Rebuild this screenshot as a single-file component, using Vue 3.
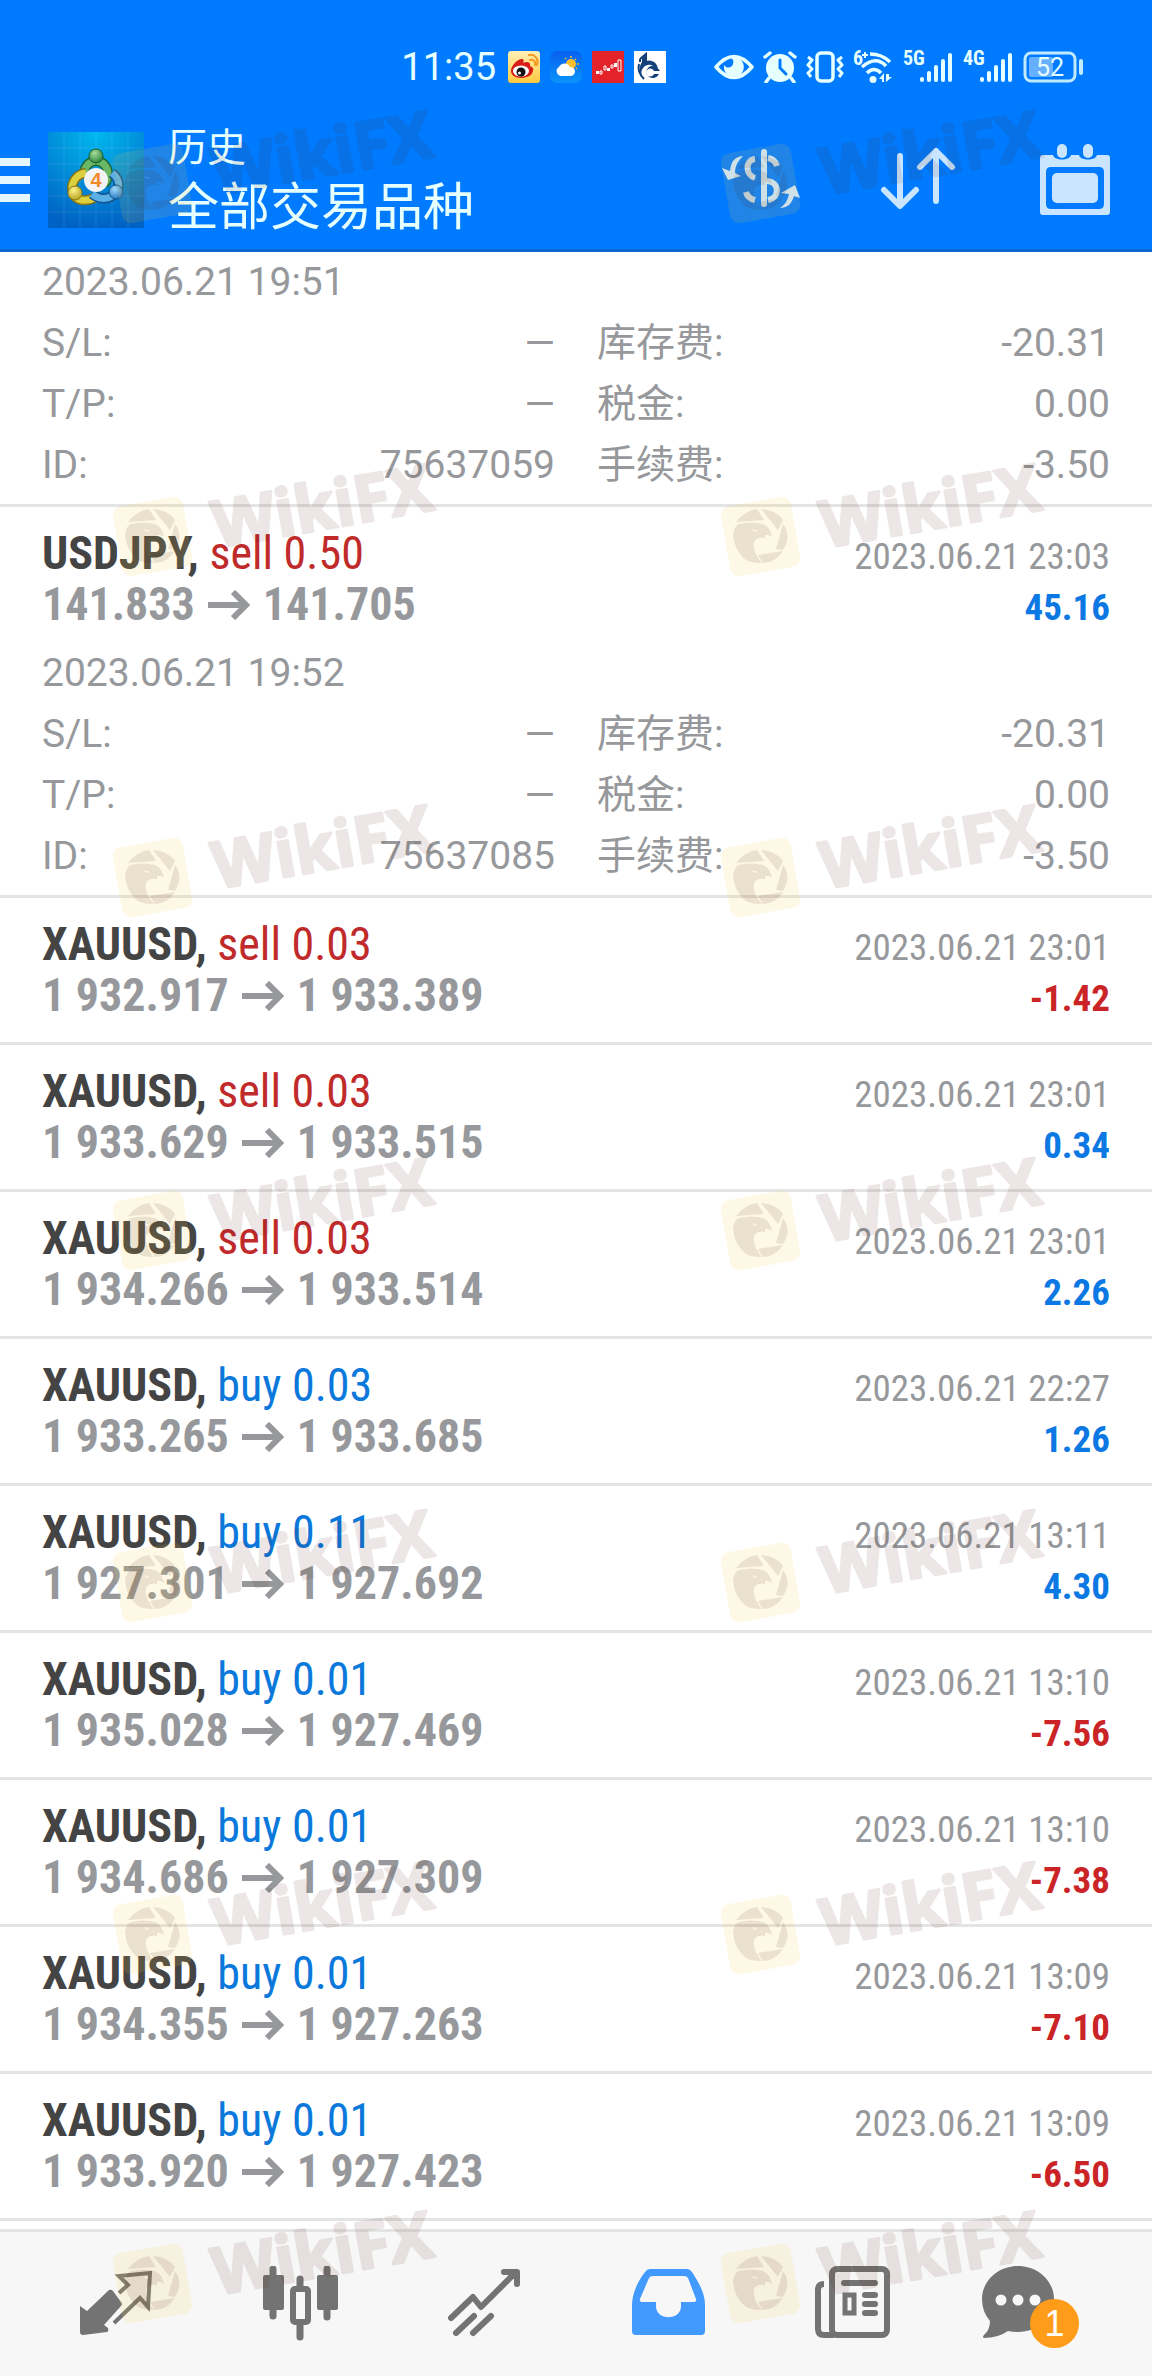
<script setup>
const details = [
  { open: '2023.06.21 19:51', id: '75637059', swap: '-20.31', tax: '0.00', fee: '-3.50' },
  { open: '2023.06.21 19:52', id: '75637085', swap: '-20.31', tax: '0.00', fee: '-3.50' },
]

const deals = [
  { symbol: 'USDJPY', side: 'sell', lots: '0.50', from: '141.833', to: '141.705', time: '2023.06.21 23:03', profit: '45.16', detail: details[1] },
  { symbol: 'XAUUSD', side: 'sell', lots: '0.03', from: '1 932.917', to: '1 933.389', time: '2023.06.21 23:01', profit: '-1.42' },
  { symbol: 'XAUUSD', side: 'sell', lots: '0.03', from: '1 933.629', to: '1 933.515', time: '2023.06.21 23:01', profit: '0.34' },
  { symbol: 'XAUUSD', side: 'sell', lots: '0.03', from: '1 934.266', to: '1 933.514', time: '2023.06.21 23:01', profit: '2.26' },
  { symbol: 'XAUUSD', side: 'buy', lots: '0.03', from: '1 933.265', to: '1 933.685', time: '2023.06.21 22:27', profit: '1.26' },
  { symbol: 'XAUUSD', side: 'buy', lots: '0.11', from: '1 927.301', to: '1 927.692', time: '2023.06.21 13:11', profit: '4.30' },
  { symbol: 'XAUUSD', side: 'buy', lots: '0.01', from: '1 935.028', to: '1 927.469', time: '2023.06.21 13:10', profit: '-7.56' },
  { symbol: 'XAUUSD', side: 'buy', lots: '0.01', from: '1 934.686', to: '1 927.309', time: '2023.06.21 13:10', profit: '-7.38' },
  { symbol: 'XAUUSD', side: 'buy', lots: '0.01', from: '1 934.355', to: '1 927.263', time: '2023.06.21 13:09', profit: '-7.10' },
  { symbol: 'XAUUSD', side: 'buy', lots: '0.01', from: '1 933.920', to: '1 927.423', time: '2023.06.21 13:09', profit: '-6.50' },
]

// the first deal is scrolled half out, only its details are left
const rows = [{ detail: details[0] }, ...deals]

const signalBars = [5, 11, 17, 23, 29]
const markRows = [107, 460, 801, 1154, 1506, 1858, 2207]

const cells = (d) => [
  ['S/L:', '—'],
  ['库存费:', d.swap],
  ['T/P:', '—'],
  ['税金:', d.tax],
  ['ID:', d.id],
  ['手续费:', d.fee],
]
</script>

<template>
  <div class="app">
    <header class="header">
      <div class="status">
        <span class="clock">11:35</span>
        <div class="notes">
          <svg width="32" height="32" viewBox="0 0 32 32">
            <defs>
              <linearGradient id="weibo" x1="0" y1="0" x2="0" y2="1">
                <stop offset="0" stop-color="#fff0b8" />
                <stop offset="1" stop-color="#ffc93c" />
              </linearGradient>
            </defs>
            <rect width="32" height="32" rx="3" fill="url(#weibo)" />
            <path d="M3 20c0-5 6-12 11-12 2 0 2 2 1 4 4-2 8-1 7 3 3 1 4 3 3 5-1 5-7 7-12 7C7 27 3 24 3 20z" fill="#d81e16" />
            <ellipse cx="13" cy="20" rx="8" ry="5.500" fill="#fff" />
            <circle cx="13" cy="21" r="4.500" fill="#111" />
            <circle cx="11.500" cy="22" r="1.500" fill="#fff" />
            <path d="M22 9c4-1 6 2 5 5M21 4c6-1 10 4 8 10" fill="none" stroke="#f39a1d" stroke-width="2" stroke-linecap="round" />
          </svg>
          <svg width="32" height="32" viewBox="0 0 32 32">
            <defs>
              <linearGradient id="sky" x1="0" y1="0" x2="0" y2="1">
                <stop offset="0" stop-color="#0860ef" />
                <stop offset="1" stop-color="#0a94fb" />
              </linearGradient>
            </defs>
            <rect width="32" height="32" rx="7" fill="url(#sky)" />
            <circle cx="21" cy="13" r="5" fill="#ffc02e" />
            <path d="M21 5v2M26 8l-1 1M29 13h-2M15 7l1 1M27 18l-1-1" stroke="#ffc02e" stroke-width="1.500" />
            <path d="M10 25a5 5 0 0 1-1-9 6 6 0 0 1 11 0 4.500 4.500 0 0 1 1 9z" fill="#fff" />
          </svg>
          <svg width="32" height="32" viewBox="0 0 32 32">
            <rect width="32" height="32" fill="#e3222a" />
            <path d="M4 20h3v3H4zM15 17h3v3h-3zM22 12h3v4h-3z" fill="#fff" />
            <path d="M8 20h2v3H8zM12 15h2v4h-2zM19 14h2v3h-2zM26 9h3v11h-3z" fill="none" stroke="#fff" />
          </svg>
          <svg width="32" height="32" viewBox="0 0 32 32">
            <rect width="32" height="32" fill="#fff" />
            <path d="M6 8l6-5v9M6 8v3M5 13q-2 8 5 15" fill="none" stroke="#14417c" stroke-width="2" />
            <path d="M8 7l4-3v6c6-2 12 2 12 9h-3c-1-6-8-7-12-2-2 3-2 5-1 8-3-4-3-10 0-14z" fill="#14417c" />
            <path d="M26 20h-6a4 4 0 1 0 0 3h5c-2 4-6 5-10 3-5-4-2-11 3-11 4 0 6 2 8 5z" fill="#14417c" />
          </svg>
        </div>
        <div class="system">
          <svg width="40" height="32" viewBox="0 0 40 32">
            <path d="M2 16Q20-5 38 16 20 37 2 16z" fill="none" stroke="#e6ffff" stroke-width="3.500" stroke-linejoin="round" />
            <path d="M20 6a10 10 0 1 1-10 8c3 4 8 3 9-1 1-3 0-5-2-6z" fill="#e6ffff" />
          </svg>
          <svg width="34" height="32" viewBox="0 0 34 32">
            <circle cx="17" cy="17" r="14" fill="#e6ffff" />
            <path d="M2 6l5-4M32 6l-5-4M6 27l-3 4M28 27l3 4" stroke="#e6ffff" stroke-width="3.500" stroke-linecap="round" />
            <path d="M17 9v8l6 6" fill="none" stroke="#007bff" stroke-width="3" stroke-linecap="round" />
          </svg>
          <svg width="38" height="32" viewBox="0 0 38 32" fill="none" stroke="#e6ffff" stroke-linejoin="round">
            <rect x="11" y="2" width="16" height="28" rx="4" stroke-width="3.500" />
            <path d="M2 6l4 3-4 5 4 4-4 4 3 4M36 6l-4 3 4 5-4 4 4 4-3 4" stroke-width="3" />
          </svg>
          <svg width="41" height="40" viewBox="0 -4 41 40">
            <text class="net" x="0" y="14">6</text>
            <path d="M9 4h6M12 1v6" stroke="#e6ffff" stroke-width="2" />
            <path d="M17 3q12 0 20 8M9 16q14-12 24-1M14 22q7-7 14 0" fill="none" stroke="#e6ffff" stroke-width="3.500" />
            <circle cx="20" cy="28.500" r="3.500" fill="#e6ffff" />
            <path d="M26 28l5-6v9h-2v-3zM33 23v8l6-5h-3v-3z" fill="#e6ffff" />
          </svg>
          <svg v-for="net in ['5G', '4G']" :key="net" width="51" height="40" viewBox="0 -4 51 40">
            <text class="net" x="0" y="14">{{ net }}</text>
            <rect v-for="(h, i) in signalBars" :key="h" :x="17 + i * 7" :y="31 - h" width="4" :height="h" rx="2" fill="#e6ffff" />
          </svg>
          <svg width="61" height="32" viewBox="0 0 61 32">
            <rect x="2" y="2" width="50" height="28" rx="6" fill="none" stroke="#bfeaff" stroke-width="3" />
            <rect x="6" y="6" width="24" height="20" rx="2" fill="#66b0ff" />
            <rect x="56" y="8" width="4" height="16" rx="2" fill="#bfeaff" />
            <text class="battery" x="27" y="25" text-anchor="middle">52</text>
          </svg>
        </div>
      </div>
      <div class="toolbar">
        <button class="menu" aria-label="菜单"><i></i><i></i><i></i></button>
        <svg class="logo" width="96" height="96" viewBox="0 0 96 96">
          <defs>
            <radialGradient id="tile" cx=".5" cy="0" r="1">
              <stop offset="0" stop-color="#00b8ee" />
              <stop offset="1" stop-color="#0062c4" />
            </radialGradient>
            <radialGradient id="green" cx=".4" cy=".3" r=".8">
              <stop offset="0" stop-color="#a6dc9a" />
              <stop offset="1" stop-color="#1e7a35" />
            </radialGradient>
            <radialGradient id="gold" cx=".4" cy=".3" r=".8">
              <stop offset="0" stop-color="#fff48a" />
              <stop offset="1" stop-color="#ad9816" />
            </radialGradient>
            <radialGradient id="azure" cx=".4" cy=".3" r=".8">
              <stop offset="0" stop-color="#9bdcff" />
              <stop offset="1" stop-color="#1568b4" />
            </radialGradient>
          </defs>
          <rect width="96" height="96" fill="url(#tile)" />
          <path d="M0 16h96M0 32h96M0 48h96M0 64h96M0 80h96M16 0v96M32 0v96M48 0v96M64 0v96M80 0v96" stroke="#fff" stroke-opacity=".1" />
          <path d="M36 42a12 13 0 0 1 24 0c0 4-2 8-4 10" fill="none" stroke="#21662f" stroke-width="10" />
          <path d="M36 42a12 13 0 0 1 24 0c0 4-2 8-4 10" fill="none" stroke="#6ab866" stroke-width="7" />
          <path d="M38 41a15 15 0 0 0-13 20c3 8 13 9 21 5" fill="none" stroke="#837518" stroke-width="10" />
          <path d="M38 41a15 15 0 0 0-13 20c3 8 13 9 21 5" fill="none" stroke="#ddd03e" stroke-width="7" />
          <path d="M64 41c9 7 9 17 0 23-6 4-14 3-20-2" fill="none" stroke="#155389" stroke-width="10" />
          <path d="M64 41c9 7 9 17 0 23-6 4-14 3-20-2" fill="none" stroke="#5bb0e8" stroke-width="7" />
          <circle cx="48" cy="24" r="7" fill="url(#green)" stroke="#185c27" />
          <circle cx="27" cy="61" r="7" fill="url(#gold)" stroke="#897814" />
          <circle cx="68" cy="60" r="7" fill="url(#azure)" stroke="#155389" />
          <circle cx="48" cy="48" r="12" fill="#f4f4f4" />
          <text x="48" y="55" text-anchor="middle" class="four">4</text>
        </svg>
        <div class="titles">
          <h1>历史</h1>
          <p>全部交易品种</p>
        </div>
        <div class="actions">
          <button aria-label="货币">
            <svg width="78" height="72" viewBox="0 0 78 72">
              <path d="M42 8v52" stroke="#c9e5ff" stroke-width="6" stroke-linecap="round" />
              <path d="M33 15c-10 1-10 16 0 19M46 14c5 1 8 4 9 8M24 48c1 4 4 7 9 8M45 37c13 1 13 17 1 19" fill="none" stroke="#c9e5ff" stroke-width="6" />
              <path d="M21 12C12 13 9 18 8 27L0 24l6 12 13-4-6-3c0-7 3-12 8-17zM58 64c6-4 8-9 9-14l-8-1 14-8 5 13-6-2c-2 7-6 12-14 12z" fill="#c9e5ff" />
            </svg>
          </button>
          <button aria-label="排序">
            <svg width="80" height="72" viewBox="0 0 80 72">
              <path d="M20 12v49M4 46l16 16 16-16M56 57V7M40 23L56 7l16 16" fill="none" stroke="#c9e5ff" stroke-width="6" stroke-linecap="round" stroke-linejoin="round" />
            </svg>
          </button>
          <button aria-label="日历">
            <svg width="70" height="72" viewBox="0 0 70 72">
              <path d="M3 11h10c1 6 17 6 18 0h8c1 6 17 6 18 0h10q3 0 3 3v54q0 3-3 3H3q-3 0-3-3V14q0-3 3-3zm8 12q-5 0-5 5v32q0 5 5 5h48q5 0 5-5V28q0-5-5-5z" fill="#c9e5ff" fill-rule="evenodd" />
              <rect x="12" y="29" width="46" height="30" rx="5" fill="#c9e5ff" />
              <rect x="17" y="0" width="10" height="14" rx="5" fill="#c9e5ff" />
              <rect x="43" y="0" width="10" height="14" rx="5" fill="#c9e5ff" />
            </svg>
          </button>
        </div>
      </div>
    </header>

    <main class="list">
      <article v-for="(row, i) in rows" :key="i" class="deal" :class="{ open: row.detail }">
        <template v-if="row.symbol">
          <div class="line">
            <h2>{{ row.symbol }}, <span :class="row.side">{{ row.side }} {{ row.lots }}</span></h2>
            <time>{{ row.time }}</time>
          </div>
          <div class="line">
            <p class="price">
              <span>{{ row.from }}</span>
              <svg width="42" height="30" viewBox="0 0 42 30" role="img" aria-label="到">
                <path d="M0 15h38M25 2l13 13-13 13" fill="none" stroke="#96989b" stroke-width="6" />
              </svg>
              <span>{{ row.to }}</span>
            </p>
            <strong :class="row.profit.startsWith('-') ? 'loss' : 'gain'">{{ row.profit }}</strong>
          </div>
        </template>
        <div v-if="row.detail" class="detail">
          <time>{{ row.detail.open }}</time>
          <dl>
            <div v-for="[label, value] in cells(row.detail)" :key="label">
              <dt>{{ label }}</dt>
              <dd>{{ value }}</dd>
            </div>
          </dl>
        </div>
      </article>
    </main>

    <nav class="tabs">
      <button aria-label="行情">
        <svg width="76" height="76" viewBox="0 0 76 76">
          <path d="M2 40l7 5 22-21q2-1 4 1l8 11q2 2 0 4L26 59l4 3q1 3-1 4L5 69q-3 0-3-3z" fill="#737373" />
          <path d="M41 27l9-8-9-9 31-3-2 34-8-9-26 25" fill="none" stroke="#737373" stroke-width="4" />
        </svg>
      </button>
      <button aria-label="图表">
        <svg width="78" height="76" viewBox="0 0 78 76">
          <path d="M12 3v47M66 3v48M39 13v58" stroke="#737373" stroke-width="7" stroke-linecap="round" />
          <path d="M4 9h17q2 0 2 2v31q0 2-2 2H4q-2 0-2-2V11q0-2 2-2zM58 9h17q2 0 2 2v31q0 2-2 2H58q-2 0-2-2V11q0-2 2-2z" fill="#737373" />
          <rect x="32" y="23" width="15" height="33" rx="2" fill="#f7f7f7" stroke="#737373" stroke-width="6" />
        </svg>
      </button>
      <button aria-label="交易">
        <svg width="76" height="76" viewBox="0 0 76 76">
          <path d="M5 52l22-21 8 10L70 6M58 6h13v12M28 50L10 67M45 50L27 67" fill="none" stroke="#737373" stroke-width="6" stroke-linecap="round" stroke-linejoin="round" />
        </svg>
      </button>
      <button aria-label="历史" aria-current="page">
        <svg width="76" height="76" viewBox="0 0 76 76">
          <path d="M20 3h37q3 0 5 3c9 14 13 23 13 33v26q0 4-4 4H6q-4 0-4-4V39C2 29 7 16 15 6q2-3 5-3zm3 7q-3 0-4 2L10 33q-1 3 2 3h14v4c0 15 25 15 25 0v-4h13q3 0 2-3l-8-21q-1-2-4-2z" fill="#429aff" fill-rule="evenodd" />
        </svg>
      </button>
      <button aria-label="新闻">
        <svg width="76" height="76" viewBox="0 0 76 76" fill="none" stroke="#737373" stroke-width="6">
          <rect x="18" y="3" width="55" height="66" rx="5" />
          <path d="M10 18q-6 0-6 6v39q0 6 6 6h10" />
          <path d="M30 17h31M51 29h10M51 38h10M51 47h10" stroke-linecap="round" />
          <rect x="31" y="29" width="9" height="18" stroke-width="5" />
        </svg>
      </button>
      <button aria-label="消息">
        <span class="chat">
          <svg width="76" height="76" viewBox="0 0 76 76">
            <path d="M37 0c20 0 36 15 36 33S57 66 37 66q-6 0-10-1Q17 72 3 72q-2-1 0-3 6-5 6-14Q1 46 1 33C1 15 17 0 37 0z" fill="#737373" />
            <g fill="#f7f7f7">
              <circle cx="20" cy="34" r="5.500" />
              <circle cx="37" cy="34" r="5.500" />
              <circle cx="54" cy="34" r="5.500" />
            </g>
          </svg>
          <span class="badge">1</span>
        </span>
      </button>
    </nav>

    <div class="marks" aria-hidden="true">
      <div v-for="y in markRows" :key="y" class="mark-row" :style="{ top: y + 'px' }">
        <svg v-for="n in 2" :key="n" width="340" height="124" viewBox="0 0 340 124">
          <rect x="5" y="41" width="71" height="71" rx="9" transform="rotate(-10 40.500 76.500)" fill="#fac83c" opacity=".13" />
          <g fill="#502014" opacity=".1">
            <path d="M16 62q8-11 21-13l7 11zM41 49q15 1 22 11l-5 10zM63 64q9 12 0 26l-7-1zM38 95l25-4q-8 12-20 12z" />
            <path d="M13 74q2-9 6-10 12-3 24 0 7 3 9 13-4-3-7-2v3q-13-2-11 10 1 7 8 15-15 1-21-8-7-8-8-21z" />
            <path d="M32 69l6 2q-4 2-6-2z" fill="#fff" />
          </g>
          <g opacity=".1">
            <text class="mark" x="105" y="88" transform="rotate(-10 105 88)">WikiFX</text>
          </g>
        </svg>
      </div>
    </div>
  </div>
</template>

<style>
body {
  margin: 0;
  background: #fff;
}
</style>

<style scoped>
.app {
  position: relative;
  display: flex;
  flex-direction: column;
  height: 100vh;
  overflow: hidden;
  font-family: Roboto, 'Noto Sans CJK SC', sans-serif;
  color: #96989b;
}

h1,
h2,
p,
dl,
dd {
  margin: 0;
  font-weight: 400;
}

button {
  display: flex;
  align-items: center;
  justify-content: center;
  padding: 0;
  border: 0;
  background: none;
}

svg {
  display: block;
  flex: none;
}

.header {
  background: #007bff;
  border-bottom: 3px solid #0f68d2;
}

.status {
  display: flex;
  align-items: center;
  justify-content: flex-end;
  height: 88px;
  padding: 23px 68px 0 0;
}

.clock {
  margin-right: 12px;
  font-size: 38px;
  color: #e6ffff;
}

.notes {
  display: flex;
  gap: 10px;
  margin-right: 48px;
}

.system {
  display: flex;
  align-items: center;
  gap: 9px;
}

.net {
  font: 700 20px 'Roboto Condensed', 'Liberation Sans Narrow', sans-serif;
  fill: #e6ffff;
}

.battery {
  font-size: 25px;
  fill: #e6ffff;
}

.toolbar {
  display: flex;
  align-items: center;
  height: 138px;
  padding-right: 42px;
}

.menu {
  flex-direction: column;
  align-items: flex-start;
  gap: 10px;
  width: 48px;
}

.menu i {
  width: 30px;
  height: 8px;
  background: #e6f6ff;
}

.four {
  font: 700 20px 'Liberation Sans', sans-serif;
  fill: #f08a2c;
}

.titles {
  flex: 1;
  margin-left: 24px;
  padding-bottom: 4px;
  color: #e6ffff;
}

.titles h1 {
  font-size: 39px;
  line-height: 60px;
}

.titles p {
  font-size: 51px;
  line-height: 60px;
}

.actions {
  display: flex;
  gap: 80px;
}

.list {
  flex: 1;
  min-height: 0;
  overflow: hidden;
}

.deal {
  padding: 21px 42px;
  border-bottom: 3px solid #e4e4e4;
}

.deal.open {
  padding-bottom: 8px;
}

.deal:first-child {
  padding-top: 0;
}

.line {
  display: flex;
  align-items: baseline;
  justify-content: space-between;
  height: 51px;
  line-height: 51px;
  font-family: 'Roboto Condensed', 'Liberation Sans Narrow', sans-serif;
  font-size: 37px;
}

.line h2 {
  font-size: 46px;
  font-weight: 700;
  color: #444;
}

.line h2 span {
  font-weight: 400;
}

.price {
  display: flex;
  align-items: center;
  gap: 13px;
  font-size: 46px;
  font-weight: 700;
}

.sell {
  color: #c02a2a;
}

.buy {
  color: #0b78dc;
}

.gain {
  color: #0b78e3;
}

.loss {
  color: #cb2427;
}

.detail {
  font-size: 39px;
  line-height: 61px;
}

.line + .detail {
  margin-top: 13px;
}

.detail time {
  display: block;
}

.detail dl {
  display: grid;
  grid-template-columns: 1fr 1fr;
  column-gap: 42px;
}

.detail dl div {
  display: flex;
  justify-content: space-between;
  height: 61px;
}

.tabs {
  display: flex;
  height: 144px;
  padding: 0 24px;
  border-top: 3px solid #e4e4e4;
  background: #f7f7f7;
}

.tabs button {
  flex: 1;
}

.chat {
  position: relative;
  margin-right: 12px;
  padding-right: 22px;
}

.badge {
  position: absolute;
  right: 0;
  bottom: -6px;
  width: 49px;
  height: 49px;
  border-radius: 50%;
  background: #ff9d1a;
  color: #fff;
  font-size: 36px;
  line-height: 49px;
  text-align: center;
}

.marks {
  position: absolute;
  inset: 0;
  overflow: hidden;
  pointer-events: none;
}

.mark-row {
  position: absolute;
  left: 112px;
  display: flex;
  gap: 268px;
}

.mark {
  font: 700 65px 'Open Sans', sans-serif;
  fill: #502014;
  stroke: #502014;
  stroke-width: 3;
  stroke-linejoin: round;
}
</style>
